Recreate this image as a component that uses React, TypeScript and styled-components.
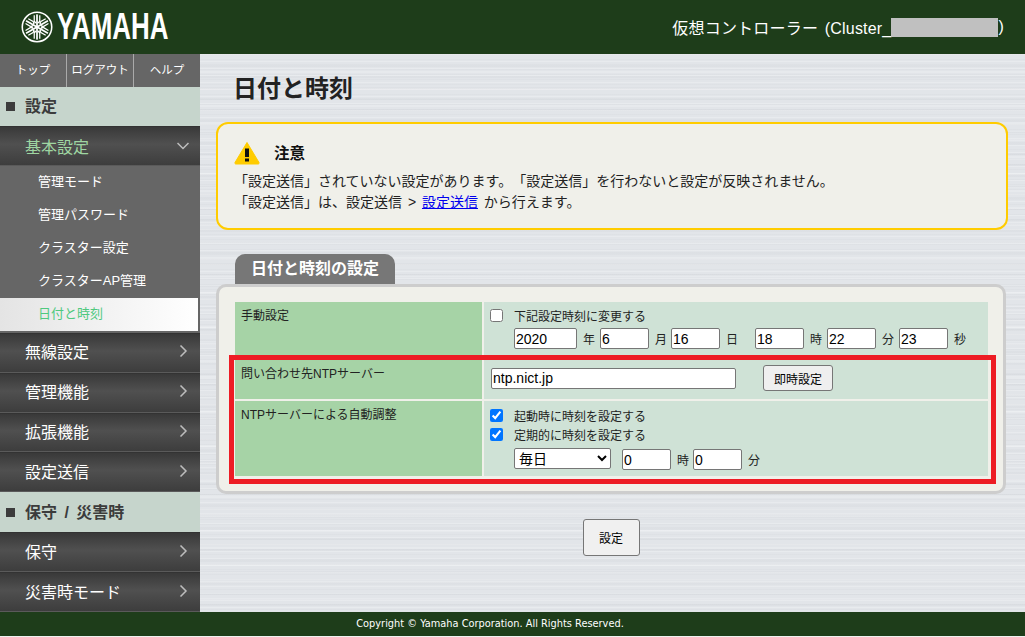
import React from 'react';
import styled, { createGlobalStyle } from 'styled-components';

const FONT = '"Liberation Sans", "Noto Sans CJK JP", sans-serif';

const GlobalStyle = createGlobalStyle`
  html, body {
    margin: 0;
    padding: 0;
    height: 100%;
    overflow: hidden;
    background: #f0f0f0;
    font-family: ${FONT};
    color: #222;
    text-spacing-trim: space-all;
    font-feature-settings: "palt" 0;
  }
`;

const Page = styled.div`
  position: relative;
  width: 1025px;
  height: 637px;
  display: flex;
  flex-direction: column;
  overflow: hidden;
`;

const Header = styled.header`
  height: 54px;
  flex: none;
  background: #1e3d1a;
  display: flex;
  align-items: center;
  justify-content: space-between;
  padding: 0 21px 0 21px;
  color: #fff;
`;

const Logo = styled.div`
  display: flex;
  align-items: center;
  gap: 4px;
`;

const LogoText = styled.span`
  display: inline-block;
  width: 110px;
  font-weight: 700;
  font-size: 36px;
  line-height: 1;
  color: #fff;
  transform: scaleX(0.72);
  transform-origin: left center;
`;

const HeaderTitle = styled.div`
  font-size: 16px;
  letter-spacing: 0.2px;
  word-spacing: 2px;
  display: flex;
  align-items: center;
  white-space: pre;
`;

const Masked = styled.span`
  display: inline-block;
  width: 107px;
  height: 19px;
  background: #c0c0c0;
`;

const Body = styled.div`
  flex: 1;
  display: flex;
  min-height: 0;
`;

const Sidebar = styled.nav`
  width: 200px;
  flex: none;
  display: flex;
  flex-direction: column;
  background: #666;
`;

const TopLinks = styled.div`
  height: 33px;
  display: grid;
  grid-template-columns: 67px 67px 66px;
  background: #666;
`;

const TopLink = styled.a<{ $last?: boolean }>`
  display: flex;
  align-items: center;
  justify-content: center;
  padding-bottom: 2px;
  font-size: 11.5px;
  color: #fff;
  border-right: ${(p) => (p.$last ? 'none' : '1px solid #aaa')};
`;

const Section = styled.div<{ $h: number }>`
  height: ${(p) => p.$h}px;
  box-sizing: border-box;
  padding: 0 0 2px 6px;
  background: #c6d5cc;
  display: flex;
  align-items: center;
  gap: 10px;
  font-size: 16px;
  font-weight: 700;
  word-spacing: 3px;
  color: #3c3c3c;
`;

const Square = styled.span`
  width: 9px;
  height: 9px;
  margin-top: 2px;
  background: #3c3c3c;
`;

const MenuItem = styled.div<{ $open?: boolean }>`
  height: 40px;
  box-sizing: border-box;
  background: linear-gradient(#393939 0%, #505050 45%, #3d3d3d 100%);
  border-top: 1px solid #333;
  border-bottom: 1px solid #5a5a5a;
  display: flex;
  align-items: center;
  justify-content: space-between;
  padding: 0 11px ${(p) => (p.$open ? '0' : '3px')} 25px;
  font-size: 16px;
  color: ${(p) => (p.$open ? '#9fd6a2' : '#fff')};
`;

const SubList = styled.div`
  display: flex;
  flex-direction: column;
  padding-bottom: 2px;
  background: #666;
`;

const SubItem = styled.div<{ $active?: boolean }>`
  height: 33px;
  box-sizing: border-box;
  margin-right: ${(p) => (p.$active ? '2px' : '0')};
  display: flex;
  align-items: center;
  padding: 0 0 4px 38px;
  font-size: 13px;
  color: ${(p) => (p.$active ? '#4fc97f' : '#fff')};
  background: ${(p) => (p.$active ? 'linear-gradient(90deg, #e4e4e4, #ffffff)' : '#666')};
`;

const Main = styled.main`
  flex: 1;
  min-width: 0;
  padding: 0 17px 0 16px;
  background-color: #e2e5e9;
  background-image:
    repeating-linear-gradient(180deg, rgba(255, 255, 255, 0.22) 0 1px, transparent 1px 7px),
    repeating-linear-gradient(180deg, rgba(110, 115, 125, 0.04) 0 2px, transparent 2px 11px),
    repeating-linear-gradient(180deg, rgba(255, 255, 255, 0.18) 0 2px, transparent 2px 17px),
    repeating-linear-gradient(180deg, rgba(110, 115, 125, 0.03) 0 1px, transparent 1px 5px);
`;

const Title = styled.h1`
  margin: 0;
  padding: 21px 0 0 17px;
  height: 48px;
  box-sizing: border-box;
  font-size: 24px;
  line-height: 28px;
  font-weight: 700;
  color: #222;
`;

const Notice = styled.div`
  margin-top: 20px;
  height: 108px;
  box-sizing: border-box;
  border: 2px solid #ffcc00;
  border-radius: 12px;
  background: #f0f0ea;
  padding: 15px 0 0 16px;
  font-size: 14px;
  line-height: 21px;
  word-spacing: 2px;
  color: #222;
`;

const NoticeHead = styled.div`
  display: flex;
  align-items: center;
  gap: 14px;
  height: 28px;
  margin-bottom: 4px;
  font-size: 15.5px;
  font-weight: 700;
  color: #111;
`;

const Tab = styled.div`
  margin: 24px 0 0 19px;
  width: 160px;
  height: 30px;
  box-sizing: border-box;
  background: #777;
  border-radius: 10px 10px 0 0;
  color: #fff;
  font-size: 16px;
  font-weight: 700;
  line-height: 30px;
  text-align: center;
`;

const Panel = styled.section`
  width: 790px;
  height: 210px;
  box-sizing: border-box;
  border: 3px solid #cdcdcd;
  border-radius: 10px;
  background: #f0f0ea;
  padding: 15px 15px 0 16px;
`;

const SettingsGrid = styled.div`
  display: grid;
  grid-template-columns: 247px 504px;
  grid-template-rows: 56px 39px 75px;
  gap: 2px;
`;

const Label = styled.div`
  background: #a6d3a6;
  padding: 6px 0 0 6px;
  font-size: 12px;
  line-height: 16px;
  color: #222;
`;

const Cell = styled.div<{ $pt: number }>`
  background: #cfe2d6;
  padding: ${(p) => p.$pt}px 0 0 6px;
  font-size: 12px;
  color: #222;
  display: flex;
  flex-direction: column;
  align-items: flex-start;
`;

const CheckRow = styled.label`
  display: flex;
  align-items: center;
  height: 19px;
  gap: 11px;
`;

const Check = styled.input`
  width: 13px;
  height: 13px;
  margin: 0;
`;

const FieldRow = styled.div<{ $pl?: number; $mt?: number }>`
  display: flex;
  align-items: center;
  padding-left: ${(p) => p.$pl ?? 0}px;
  margin-top: ${(p) => p.$mt ?? 0}px;
`;

const TextBox = styled.input<{ $w: number }>`
  width: ${(p) => p.$w}px;
  height: 21px;
  box-sizing: border-box;
  border: 1px solid #767676;
  border-radius: 2px;
  background: #fff;
  padding: 1px 1px;
  font-family: ${FONT};
  font-size: 14px;
  color: #000;
`;

const Unit = styled.span<{ $w: number }>`
  width: ${(p) => p.$w}px;
  box-sizing: border-box;
  padding-left: 6px;
  font-size: 12px;
  white-space: nowrap;
`;

const DaySelect = styled.select`
  width: 97px;
  height: 21px;
  box-sizing: border-box;
  border: 1px solid #767676;
  border-radius: 2px;
  background: #fff;
  font-family: ${FONT};
  font-size: 14px;
  color: #000;
  margin: 0 11px 2px 0;
`;

const SmallButton = styled.button`
  margin-left: 27px;
  width: 70px;
  height: 26px;
  box-sizing: border-box;
  border: 1px solid #767676;
  border-radius: 3px;
  background: #efefef;
  font-family: ${FONT};
  font-size: 12px;
  color: #000;
  padding: 0;
`;

const Actions = styled.div`
  display: flex;
  justify-content: center;
  padding: 25px 2px 0 0;
`;

const SubmitButton = styled.button`
  width: 57px;
  height: 37px;
  border: 1px solid #767676;
  border-radius: 3px;
  background: #f0f0f0;
  font-family: ${FONT};
  font-size: 12px;
  color: #000;
  padding: 0;
`;

const Footer = styled.footer`
  height: 24px;
  flex: none;
  margin-bottom: 1px;
  padding: 0 45px 2px 0;
  background: #1e3d1a;
  color: #fff;
  font-family: "DejaVu Sans", sans-serif;
  font-size: 9.8px;
  display: flex;
  align-items: center;
  justify-content: center;
  box-sizing: border-box;
`;

const Highlight = styled.div`
  position: absolute;
  left: 229px;
  top: 355px;
  width: 767px;
  height: 129px;
  box-sizing: border-box;
  border: 5px solid #ed1c24;
  pointer-events: none;
`;

const YamahaMark = () => (
  <svg width="32" height="32" viewBox="0 0 33 33" fill="none">
    <circle cx="16.5" cy="16.5" r="15.2" stroke="#fff" strokeWidth="1.6" />
    {[0, 60, 120].map((a) => (
      <g key={a} transform={`rotate(${a} 16.5 16.5)`} fill="#fff">
        <rect x="15.6" y="3.5" width="1.8" height="26" />
        <path d="M13 4.5h1.3v5.2c0 .9.6 1.5 1.5 1.5v1.6c-1.7 0-2.8-1.2-2.8-3z" />
        <path d="M20 4.5h-1.3v5.2c0 .9-.6 1.5-1.5 1.5v1.6c1.7 0 2.8-1.2 2.8-3z" />
        <path d="M13 28.5h1.3v-5.2c0-.9.6-1.5 1.5-1.5v-1.6c-1.7 0-2.8 1.2-2.8 3z" />
        <path d="M20 28.5h-1.3v-5.2c0-.9-.6-1.5-1.5-1.5v-1.6c1.7 0 2.8 1.2 2.8 3z" />
      </g>
    ))}
  </svg>
);

const Chevron: React.FC<{ down?: boolean }> = ({ down }) => (
  <svg width="12" height="12" viewBox="0 0 12 12" fill="none" stroke="#bdbdbd" strokeWidth="1.5">
    <path d={down ? 'M0.5 3 6 8.5 11.5 3' : 'M3.5 0.5 9 6l-5.5 5.5'} />
  </svg>
);

const WarningIcon = () => (
  <svg width="26" height="24" viewBox="0 0 26 24">
    <path d="M13 1.5 25 21.5a1 1 0 0 1-1 1.5H2a1 1 0 0 1-1-1.5z" fill="#ffcc00" stroke="#ffcc00" strokeLinejoin="round" />
    <rect x="11" y="7.5" width="4" height="8.5" fill="#111" />
    <rect x="11" y="17.5" width="4" height="3" fill="#111" />
  </svg>
);

const subItems = ['管理モード', '管理パスワード', 'クラスター設定', 'クラスターAP管理', '日付と時刻'];

const App: React.FC = () => {
  return (
    <Page>
      <GlobalStyle />
      <Header>
        <Logo>
          <YamahaMark />
          <LogoText>YAMAHA</LogoText>
        </Logo>
        <HeaderTitle>
          仮想コントローラー (Cluster_<Masked />)
        </HeaderTitle>
      </Header>
      <Body>
        <Sidebar>
          <TopLinks>
            <TopLink>トップ</TopLink>
            <TopLink>ログアウト</TopLink>
            <TopLink $last>ヘルプ</TopLink>
          </TopLinks>
          <Section $h={39}><Square />設定</Section>
          <MenuItem $open>基本設定<Chevron down /></MenuItem>
          <SubList>
            {subItems.map((s) => (
              <SubItem key={s} $active={s === '日付と時刻'}>{s}</SubItem>
            ))}
          </SubList>
          <MenuItem>無線設定<Chevron /></MenuItem>
          <MenuItem>管理機能<Chevron /></MenuItem>
          <MenuItem>拡張機能<Chevron /></MenuItem>
          <MenuItem>設定送信<Chevron /></MenuItem>
          <Section $h={40}><Square />保守 / 災害時</Section>
          <MenuItem>保守<Chevron /></MenuItem>
          <MenuItem>災害時モード<Chevron /></MenuItem>
        </Sidebar>
        <Main>
          <Title>日付と時刻</Title>
          <Notice>
            <NoticeHead><WarningIcon />注意</NoticeHead>
            <div>「設定送信」されていない設定があります。「設定送信」を行わないと設定が反映されません。</div>
            <div>「設定送信」は、設定送信 &gt; <a href="#top">設定送信</a> から行えます。</div>
          </Notice>
          <Tab>日付と時刻の設定</Tab>
          <Panel>
            <SettingsGrid>
              <Label>手動設定</Label>
              <Cell $pt={4}>
                <CheckRow><Check type="checkbox" />下記設定時刻に変更する</CheckRow>
                <FieldRow $pl={24} $mt={3}>
                  <TextBox $w={63} defaultValue="2020" /><Unit $w={23}>年</Unit>
                  <TextBox $w={49} defaultValue="6" /><Unit $w={22}>月</Unit>
                  <TextBox $w={49} defaultValue="16" /><Unit $w={35}>日</Unit>
                  <TextBox $w={49} defaultValue="18" /><Unit $w={23}>時</Unit>
                  <TextBox $w={49} defaultValue="22" /><Unit $w={23}>分</Unit>
                  <TextBox $w={49} defaultValue="23" /><Unit $w={23}>秒</Unit>
                </FieldRow>
              </Cell>
              <Label>問い合わせ先NTPサーバー</Label>
              <Cell $pt={5}>
                <FieldRow $pl={1}>
                  <TextBox $w={245} defaultValue="ntp.nict.jp" />
                  <SmallButton>即時設定</SmallButton>
                </FieldRow>
              </Cell>
              <Label>NTPサーバーによる自動調整</Label>
              <Cell $pt={5}>
                <CheckRow><Check type="checkbox" defaultChecked />起動時に時刻を設定する</CheckRow>
                <CheckRow><Check type="checkbox" defaultChecked />定期的に時刻を設定する</CheckRow>
                <FieldRow $pl={24} $mt={4}>
                  <DaySelect defaultValue="毎日"><option>毎日</option></DaySelect>
                  <TextBox $w={49} defaultValue="0" /><Unit $w={22}>時</Unit>
                  <TextBox $w={49} defaultValue="0" /><Unit $w={23}>分</Unit>
                </FieldRow>
              </Cell>
            </SettingsGrid>
          </Panel>
          <Actions><SubmitButton>設定</SubmitButton></Actions>
        </Main>
      </Body>
      <Footer>Copyright © Yamaha Corporation. All Rights Reserved.</Footer>
      <Highlight />
    </Page>
  );
};

export default App;
